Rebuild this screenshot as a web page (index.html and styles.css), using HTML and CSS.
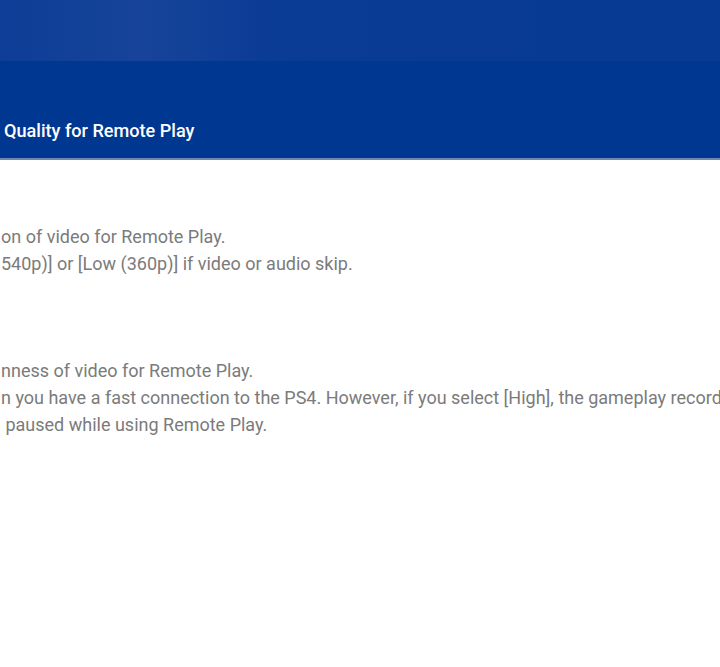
FILE: index.html
```html
<!DOCTYPE html>
<html lang="en">
<head>
    <meta charset="UTF-8">
    <meta name="viewport" content="width=device-width, initial-scale=1.0">
    <title>Quality for Remote Play</title>
    <link rel="stylesheet" href="styles.css">
</head>
<body>
    <header class="top">
        <div class="band"></div>
        <div class="title-bar">
            <h1>Quality for Remote Play</h1>
        </div>
    </header>
    <main class="settings">
        <section class="row">
            <p>on of video for Remote Play.</p>
            <p>540p)] or [Low (360p)] if video or audio skip.</p>
        </section>
        <section class="row">
            <p>nness of video for Remote Play.</p>
            <p class="long">n you have a fast connection to the PS4. However, if you select [High], the gameplay recording</p>
            <p>&nbsp;paused while using Remote Play.</p>
        </section>
    </main>
</body>
</html>
```

FILE: styles.css
```css
*{
    margin: 0;
    padding: 0;
    box-sizing: border-box;
}

html, body{
    overflow: hidden;
}

body{
    background: #fff;
    font-family: Roboto, "Noto Sans", sans-serif;
    width: 720px;
    height: 667px;
}

.band{
    height: 62px;
    background: linear-gradient(90deg, #0d3d96 0%, #17449a 20%, #0a3b95 38%, #063a93 100%);
    border-bottom: 1px solid #05368e;
}

.title-bar{
    height: 98px;
    background: #003791;
    border-bottom: 2px solid #6f86b4;
    display: flex;
    align-items: flex-end;
    padding: 0 0 15px 4px;
}

.title-bar h1{
    color: #fff;
    font-size: 18.1px;
    font-weight: 500;
    line-height: 24px;
}

.settings{
    padding: 63px 0 0 1px;
}

.row{
    margin-bottom: 80px;
}

.row p{
    color: #7b7b7b;
    font-size: 18px;
    line-height: 27px;
    white-space: nowrap;
}

.row .long{
    overflow: hidden;
}
```
